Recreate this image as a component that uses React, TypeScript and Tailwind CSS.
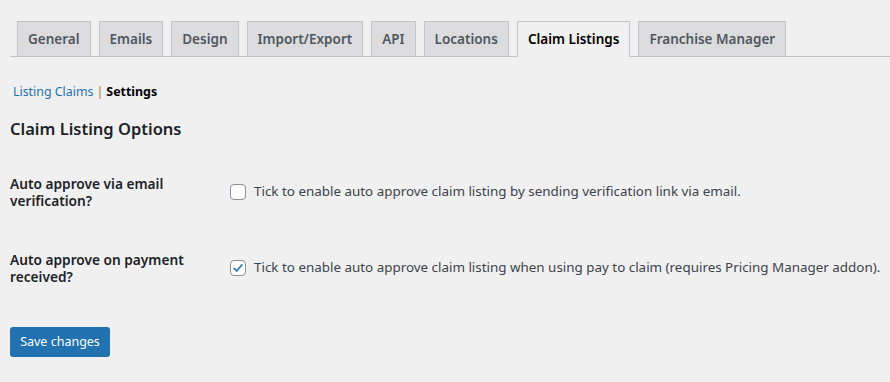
import React from 'react';

const tabs = [
  'General',
  'Emails',
  'Design',
  'Import/Export',
  'API',
  'Locations',
  'Claim Listings',
  'Franchise Manager',
];

const ACTIVE = 'Claim Listings';

function Checkbox({ checked }: { checked?: boolean }) {
  return (
    <span className="flex h-4 w-4 shrink-0 items-center justify-center rounded-[4px] border border-[#8c8f94] bg-white">
      {checked && (
        <svg viewBox="0 0 16 16" className="h-4 w-4">
          <path d="M3.6 8.4l2.9 3 5.9-7" fill="none" stroke="#3582c4" strokeWidth="2.1" strokeLinecap="round" strokeLinejoin="round" />
        </svg>
      )}
    </span>
  );
}

function OptionRow({ label, text, checked }: { label: string; text: string; checked?: boolean }) {
  return (
    <div className="flex items-start">
      <div className="w-[220px] shrink-0 pr-4 text-[13.7px] font-semibold leading-[17px] text-[#1d2327]">{label}</div>
      <label className="flex items-center gap-2 pt-[8px] text-[13.4px] leading-[17px] text-[#3c434a]">
        <Checkbox checked={checked} />
        <span className="whitespace-nowrap">{text}</span>
      </label>
    </div>
  );
}

export default function App() {
  return (
    <div className="min-h-[382px] w-[890px] bg-[#f0f0f1] pl-[10px] pt-[21px] font-['Noto_Sans',sans-serif]">
      {/* tabs */}
      <div className="flex gap-2 border-b border-[#c3c4c7] pl-[7px]">
        {tabs.map((tab) => {
          const active = tab === ACTIVE;
          return (
            <div
              key={tab}
              className={
                active
                  ? '-mb-px h-[36px] border border-b-[#f0f0f1] border-[#c3c4c7] bg-[#f0f0f1] px-[10px] pt-[7px] text-[13.5px] font-semibold text-black'
                  : 'h-[35px] border border-b-0 border-[#c3c4c7] bg-[#dcdcde] px-[10px] pt-[7px] text-[13.5px] font-semibold text-[#50575e]'
              }
            >
              {tab}
            </div>
          );
        })}
      </div>

      {/* sub nav */}
      <div className="mt-[27px] flex items-center pl-[3px] text-[12.4px] leading-[16px]">
        <span className="text-[#2271b1]">Listing Claims</span>
        <span className="mx-[3px] text-[#a0784a]">|</span>
        <span className="font-bold text-black">Settings</span>
      </div>

      <h2 className="mt-[19px] text-[16.5px] font-semibold leading-[20px] text-[#1d2327]">Claim Listing Options</h2>

      <div className="mt-[36px] flex flex-col gap-[42px]">
        <OptionRow
          label="Auto approve via email verification?"
          text="Tick to enable auto approve claim listing by sending verification link via email."
        />
        <OptionRow
          label="Auto approve on payment received?"
          text="Tick to enable auto approve claim listing when using pay to claim (requires Pricing Manager addon)."
          checked
        />
      </div>

      <button className="mt-[42px] h-[30px] w-[100px] rounded-[3px] bg-[#2271b1] text-[12.5px] text-white">Save changes</button>
    </div>
  );
}
